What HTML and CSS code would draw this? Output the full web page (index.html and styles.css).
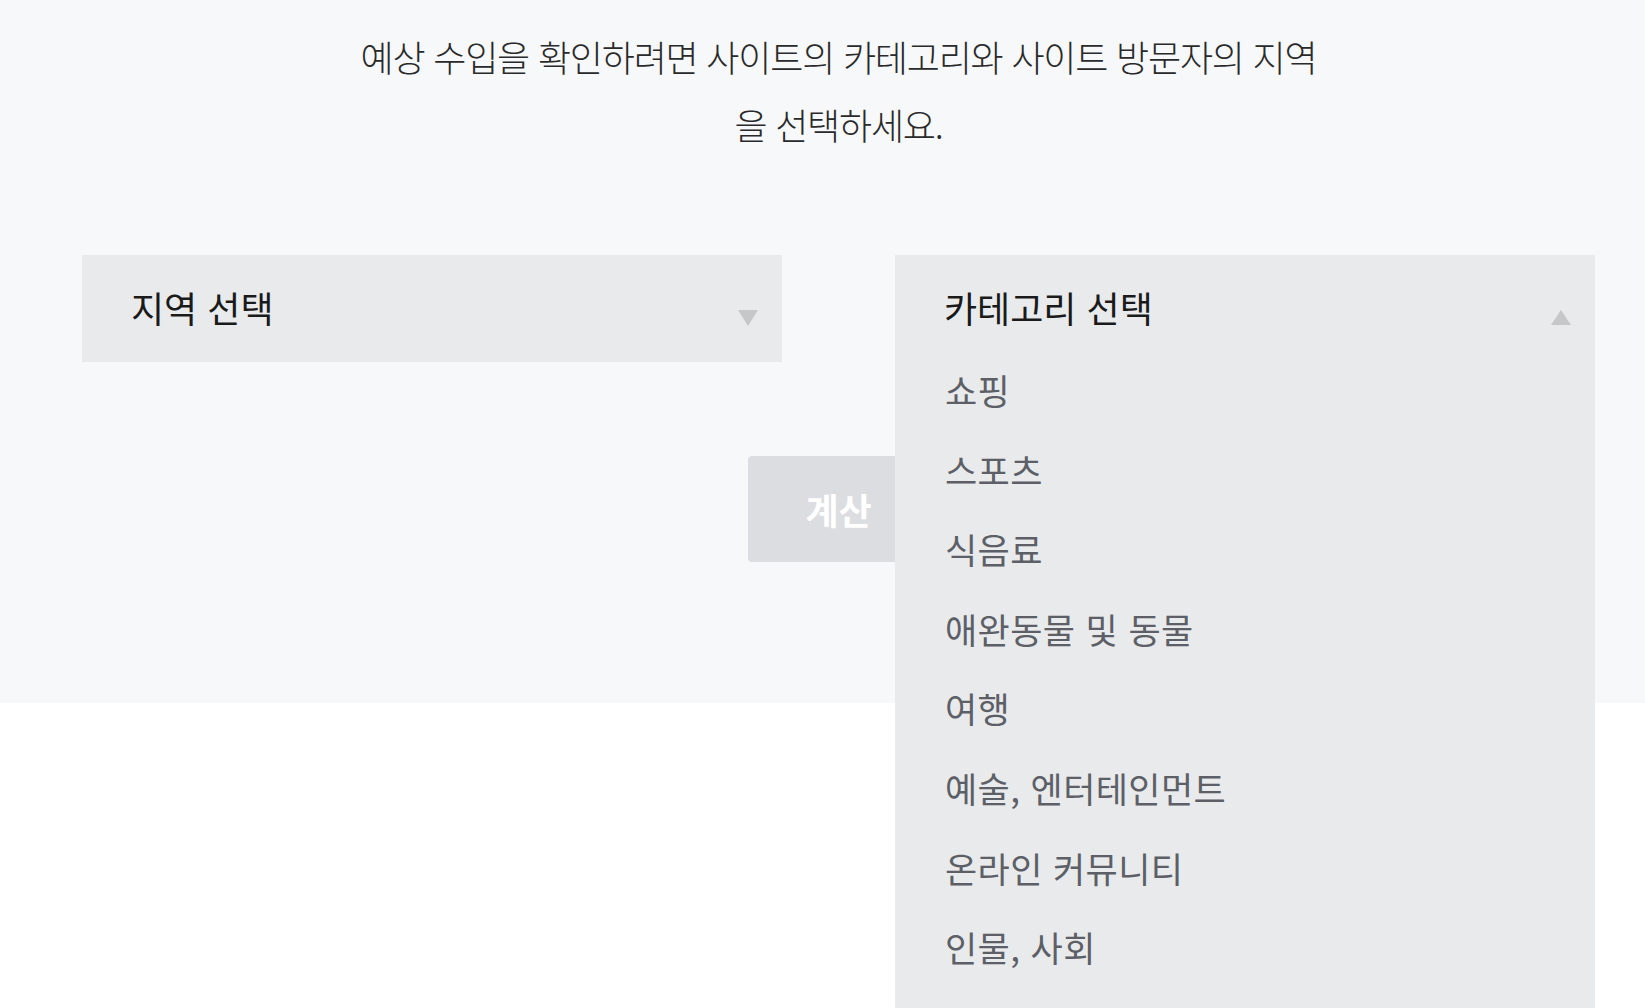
FILE: index.html
```html
<!DOCTYPE html>
<html lang="ko">
<head>
<meta charset="utf-8">
<title>예상 수입 계산</title>
<link rel="stylesheet" href="styles.css">
</head>
<body>
<section class="calc">
  <p class="intro">예상 수입을 확인하려면 사이트의 카테고리와 사이트 방문자의 지역을 선택하세요.</p>
  <div class="selects">
    <div class="select">
      <div class="select-head">
        <span class="select-label">지역 선택</span>
        <span class="arrow arrow-down"></span>
      </div>
    </div>
    <div class="select open">
      <div class="select-head">
        <span class="select-label">카테고리 선택</span>
        <span class="arrow arrow-up"></span>
      </div>
      <ul class="options">
        <li>쇼핑</li>
        <li>스포츠</li>
        <li>식음료</li>
        <li>애완동물 및 동물</li>
        <li>여행</li>
        <li>예술, 엔터테인먼트</li>
        <li>온라인 커뮤니티</li>
        <li>인물, 사회</li>
      </ul>
    </div>
  </div>
  <div class="actions">
    <button class="calc-btn" type="button">계산</button>
  </div>
</section>
</body>
</html>
```

FILE: styles.css
```css
* { box-sizing: border-box; }
html, body { margin: 0; padding: 0; }
body {
  font-family: "Noto Sans CJK KR", "Noto Sans", sans-serif;
  background: #ffffff;
  color: #222222;
  overflow: hidden;
  height: 1008px;
}
.calc {
  background: #f7f8fa;
  height: 703px;
  padding: 22px 50px 0 82px;
}
.intro {
  margin: 0 auto;
  max-width: 975px;
  text-align: center;
  font-size: 36px;
  font-weight: 300;
  line-height: 68px;
  color: #2a2a2a;
  letter-spacing: -1.2px;
}
.selects {
  display: flex;
  justify-content: space-between;
  margin-top: 97px;
}
.select {
  width: 700px;
  position: relative;
  background: #e9eaec;
}
.select-head {
  height: 107px;
  display: flex;
  align-items: center;
  justify-content: space-between;
  padding: 0 24px 4px 49px;
}
.select-label {
  font-size: 36px;
  font-weight: 400;
  color: #1a1a1a;
}
.arrow {
  width: 0;
  height: 0;
  border-left: 10px solid transparent;
  border-right: 10px solid transparent;
  margin-top: 22px;
}
.arrow-down { border-top: 16px solid #c6c7c9; }
.arrow-up { border-bottom: 15px solid #c6c7c9; }
.open { z-index: 2; }
.options {
  list-style: none;
  margin: 0;
  padding: 0 0 80px 50px;
  position: absolute;
  top: calc(100% - 12px);
  left: 0;
  right: 0;
  background: #e9eaec;
}
.options li {
  height: 79.6px;
  line-height: 79.6px;
  font-size: 35px;
  color: #5c6066;
  letter-spacing: 0.4px;
}
.actions {
  display: flex;
  justify-content: center;
  margin-top: 94px;
}
.calc-btn {
  width: 182px;
  height: 106px;
  border: none;
  border-radius: 4px;
  background: #dcdde0;
  color: #ffffff;
  font-family: inherit;
  font-size: 36px;
  font-weight: 700;
  padding: 0;
}
```
